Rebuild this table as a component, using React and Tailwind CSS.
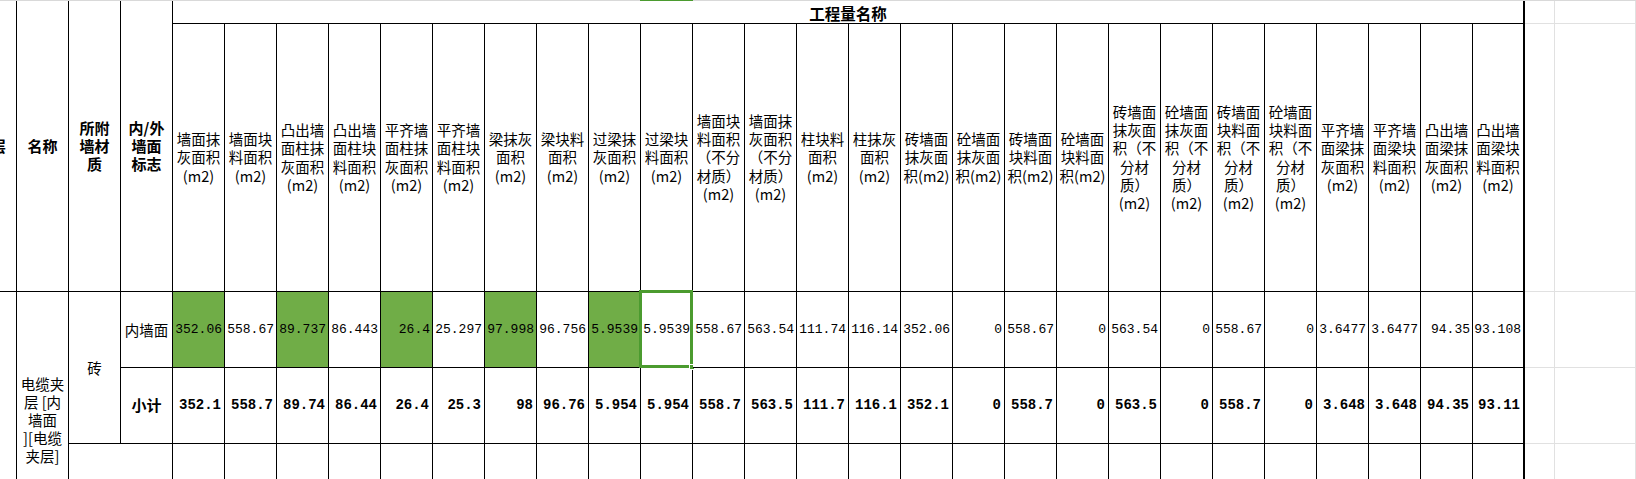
import React from "react";

const headers = [
  "墙面抹\n灰面积\n(m2)",
  "墙面块\n料面积\n(m2)",
  "凸出墙\n面柱抹\n灰面积\n(m2)",
  "凸出墙\n面柱块\n料面积\n(m2)",
  "平齐墙\n面柱抹\n灰面积\n(m2)",
  "平齐墙\n面柱块\n料面积\n(m2)",
  "梁抹灰\n面积\n(m2)",
  "梁块料\n面积\n(m2)",
  "过梁抹\n灰面积\n(m2)",
  "过梁块\n料面积\n(m2)",
  "墙面块\n料面积\n（不分\n材质）\n(m2)",
  "墙面抹\n灰面积\n（不分\n材质）\n(m2)",
  "柱块料\n面积\n(m2)",
  "柱抹灰\n面积\n(m2)",
  "砖墙面\n抹灰面\n积(m2)",
  "砼墙面\n抹灰面\n积(m2)",
  "砖墙面\n块料面\n积(m2)",
  "砼墙面\n块料面\n积(m2)",
  "砖墙面\n抹灰面\n积（不\n分材\n质）\n(m2)",
  "砼墙面\n抹灰面\n积（不\n分材\n质）\n(m2)",
  "砖墙面\n块料面\n积（不\n分材\n质）\n(m2)",
  "砼墙面\n块料面\n积（不\n分材\n质）\n(m2)",
  "平齐墙\n面梁抹\n灰面积\n(m2)",
  "平齐墙\n面梁块\n料面积\n(m2)",
  "凸出墙\n面梁抹\n灰面积\n(m2)",
  "凸出墙\n面梁块\n料面积\n(m2)",
];

const wallRow = [
  "352.06", "558.67", "89.737", "86.443", "26.4", "25.297", "97.998", "96.756", "5.9539", "5.9539",
  "558.67", "563.54", "111.74", "116.14", "352.06", "0", "558.67", "0", "563.54", "0",
  "558.67", "0", "3.6477", "3.6477", "94.35", "93.108",
];

const totalRow = [
  "352.1", "558.7", "89.74", "86.44", "26.4", "25.3", "98", "96.76", "5.954", "5.954",
  "558.7", "563.5", "111.7", "116.1", "352.1", "0", "558.7", "0", "563.5", "0",
  "558.7", "0", "3.648", "3.648", "94.35", "93.11",
];

const greenCols = [0, 2, 4, 6, 8];
const selectedCol = 9;

// right edge of the last data column is the thick one
const edge = (i) => (i === 25 ? "border-r-2" : "border-r");

const GrayCells = () => (
  <>
    <div className="border-r border-b border-[#e1e1e1]"></div>
    <div className="border-r border-b border-[#e1e1e1]"></div>
  </>
);

const App = () => {
  return (
    <div className="w-[1636px] h-[479px] overflow-hidden bg-white text-black font-['Noto_Sans_CJK_SC',sans-serif]">
      <div className="flex h-px">
        <div className="w-[640px] bg-[#d9d9d9]"></div>
        <div className="w-[53px] bg-[#4b9b2f]"></div>
        <div className="flex-1 bg-[#d9d9d9]"></div>
      </div>

      <div className="ml-[-19px] grid grid-cols-[36px_52px_52px_52px_repeat(26,52px)_30px_81px] grid-rows-[23px_268px_76px_76px_76px]">
        {/* row 1 */}
        <div className="row-span-2 flex items-center justify-center border-r border-b border-black text-[15px] font-bold">
          层
        </div>
        <div className="row-span-2 flex items-center justify-center border-r border-b border-black text-[15px] font-bold">
          名称
        </div>
        <div className="row-span-2 flex items-center justify-center border-r border-b border-black text-[15px] font-bold leading-[18px] whitespace-pre-line text-center">
          {"所附\n墙材\n质"}
        </div>
        <div className="row-span-2 flex items-center justify-center border-r border-b border-black text-[15px] font-bold leading-[18px] whitespace-pre-line text-center">
          {"内/外\n墙面\n标志"}
        </div>
        <div className="col-span-26 flex items-center justify-center pt-[3px] border-r-2 border-b border-black text-[15.5px] font-bold">
          工程量名称
        </div>
        <GrayCells />

        {/* row 2: column headers */}
        {headers.map((h, i) => (
          <div
            key={"h" + i}
            className={`${edge(i)} border-b border-black flex items-center justify-center text-center whitespace-pre-line text-[14.5px] leading-[18.3px]`}
          >
            {h}
          </div>
        ))}
        <GrayCells />

        {/* row 3 */}
        <div className="row-span-3 border-r border-black"></div>
        <div className="row-span-3 border-r border-black pt-[83px] text-center whitespace-pre-line text-[14.5px] leading-[18px]">
          {"电缆夹\n层 [内\n墙面\n][电缆\n夹层]"}
        </div>
        <div className="row-span-2 flex items-center justify-center border-r border-b border-black text-[14.5px]">
          砖
        </div>
        <div className="flex items-center justify-center border-r border-b border-black text-[14.5px]">
          内墙面
        </div>
        {wallRow.map((v, i) => (
          <div
            key={"w" + i}
            className={`relative ${edge(i)} border-b border-black flex items-center justify-end pr-[2px] font-['Liberation_Mono',monospace] text-[13px] ${
              greenCols.includes(i) ? "bg-[#70ad47]" : "bg-white"
            }`}
          >
            {v}
            {i === selectedCol && (
              <>
                <div className="absolute -left-[2px] -top-[2px] -right-[1px] -bottom-[1px] border-[3px] border-[#4b9b2f]"></div>
                <div className="absolute -right-[3px] -bottom-[3px] w-[6px] h-[6px] bg-[#4b9b2f] border border-white"></div>
              </>
            )}
          </div>
        ))}
        <GrayCells />

        {/* row 4: subtotal */}
        <div className="flex items-center justify-center border-r border-b border-black text-[15px] font-bold">
          小计
        </div>
        {totalRow.map((v, i) => (
          <div
            key={"t" + i}
            className={`${edge(i)} border-b border-black flex items-center justify-end pr-[3px] font-['Liberation_Mono',monospace] text-[14px] font-bold`}
          >
            {v}
          </div>
        ))}
        <GrayCells />

        {/* row 5 */}
        <div className="col-span-2 border-r border-b border-black"></div>
        {headers.map((h, i) => (
          <div key={"e" + i} className={`${edge(i)} border-b border-black`}></div>
        ))}
        <GrayCells />
      </div>
    </div>
  );
};

export default App;
